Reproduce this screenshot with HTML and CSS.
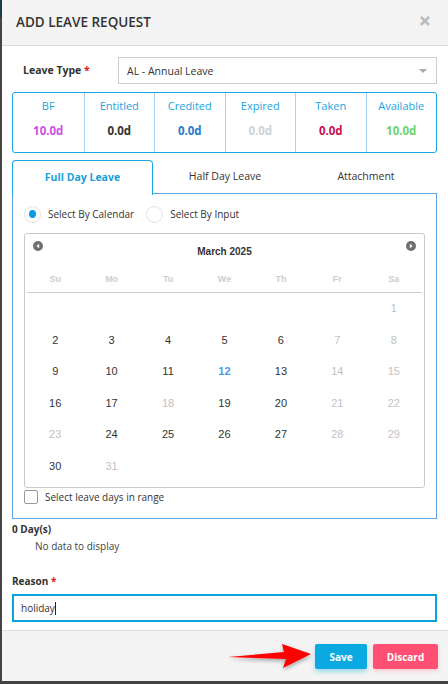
FILE: index.html
```html
<!DOCTYPE html>
<html>
<head>
<meta charset="utf-8">
<link rel="stylesheet" href="styles.css">
</head>
<body>
<div class="modal">
  <div class="modal-header">
    <h1 class="title">ADD LEAVE REQUEST</h1>
    <span class="close">&#x2715;</span>
  </div>
  <div class="modal-body">
    <div class="field-row">
      <label class="field-label">Leave Type <span class="req">*</span></label>
      <div class="select">
        <span>AL - Annual Leave</span>
        <span class="caret"></span>
      </div>
    </div>

    <div class="stats">
      <div class="stat"><div class="stat-label">BF</div><div class="stat-val v-bf">10.0d</div></div>
      <div class="stat"><div class="stat-label">Entitled</div><div class="stat-val v-ent">0.0d</div></div>
      <div class="stat"><div class="stat-label">Credited</div><div class="stat-val v-cred">0.0d</div></div>
      <div class="stat"><div class="stat-label">Expired</div><div class="stat-val v-exp">0.0d</div></div>
      <div class="stat"><div class="stat-label">Taken</div><div class="stat-val v-taken">0.0d</div></div>
      <div class="stat"><div class="stat-label">Available</div><div class="stat-val v-avail">10.0d</div></div>
    </div>

    <div class="tabs">
      <div class="tab active">Full Day Leave</div>
      <div class="tab">Half Day Leave</div>
      <div class="tab">Attachment</div>
    </div>
    <div class="tab-panel">
      <div class="radios">
        <span class="radio checked"></span><span class="radio-label first">Select By Calendar</span>
        <span class="radio"></span><span class="radio-label">Select By Input</span>
      </div>
      <div class="calendar">
        <div class="cal-head">
          <span class="nav"><svg width="10" height="10" viewBox="0 0 10 10"><circle cx="5" cy="5" r="5" fill="#6f6f6f"/><path d="M6.2 2.8 L3.4 5 L6.2 7.2 Z" fill="#fff"/></svg></span>
          <span class="cal-title">March 2025</span>
          <span class="nav"><svg width="10" height="10" viewBox="0 0 10 10"><circle cx="5" cy="5" r="5" fill="#6f6f6f"/><path d="M3.8 2.8 L6.6 5 L3.8 7.2 Z" fill="#fff"/></svg></span>
        </div>
        <div class="cal-grid dow">
          <span>Su</span><span>Mo</span><span>Tu</span><span>We</span><span>Th</span><span>Fr</span><span>Sa</span>
        </div>
        <div class="cal-grid days">
          <span></span><span></span><span></span><span></span><span></span><span></span><span class="off">1</span>
          <span>2</span><span>3</span><span>4</span><span>5</span><span>6</span><span class="off">7</span><span class="off">8</span>
          <span>9</span><span>10</span><span>11</span><span class="today">12</span><span>13</span><span class="off">14</span><span class="off">15</span>
          <span>16</span><span>17</span><span class="off">18</span><span>19</span><span>20</span><span class="off">21</span><span class="off">22</span>
          <span class="off">23</span><span>24</span><span>25</span><span>26</span><span>27</span><span class="off">28</span><span class="off">29</span>
          <span>30</span><span class="off">31</span><span></span><span></span><span></span><span></span><span></span>
        </div>
      </div>
      <div class="check-row">
        <span class="checkbox"></span><span class="check-label">Select leave days in range</span>
      </div>
    </div>

    <div class="days-count">0 Day(s)</div>
    <div class="no-data">No data to display</div>

    <label class="reason-label">Reason <span class="req">*</span></label>
    <div class="input"><span>holiday</span><span class="cursor"></span></div>
  </div>
  <div class="modal-footer">
    <svg class="arrow" width="92" height="34" viewBox="0 0 92 34">
      <defs>
        <filter id="sh" x="-20%" y="-40%" width="140%" height="180%">
          <feDropShadow dx="0" dy="2" stdDeviation="2" flood-color="#000" flood-opacity="0.35"/>
        </filter>
      </defs>
      <polygon points="2,18 58,13 56,5 85,15 57,29 60,20" fill="#ff0000" filter="url(#sh)"/>
    </svg>
    <button class="btn btn-save">Save</button>
    <button class="btn btn-discard">Discard</button>
  </div>
</div>
</body>
</html>
```

FILE: styles.css
```css
* { box-sizing: border-box; }
html, body { margin: 0; padding: 0; }
body {
  background: #444;
  font-family: "Open Sans", "Liberation Sans", sans-serif;
  color: #333;
  width: 448px;
  height: 684px;
  overflow: hidden;
  position: relative;
}
body::before {
  content: "";
  position: absolute;
  left: 0; top: 0;
  width: 2px; height: 17px;
  background: #173a4c;
}
.modal {
  margin-left: 2px;
  width: 446px;
  height: 681px;
  background: #fff;
  display: flex;
  flex-direction: column;
}
.modal-header {
  height: 46px;
  background: #f4f4f4;
  border-bottom: 1px solid #dcdcdc;
  display: flex;
  align-items: center;
  justify-content: space-between;
  padding: 0 17px 2px 14px;
}
.title {
  margin: 0;
  font-size: 13.5px;
  font-weight: 600;
  color: #333;
  letter-spacing: 0;
}
.close {
  color: #bdbdbd;
  font-size: 14px;
  font-weight: bold;
  margin-top: -2px;
  -webkit-text-stroke: 0.6px #bdbdbd;
}
.modal-body {
  flex: 1;
  padding: 11px 11px 0 10px;
}
.field-row {
  display: flex;
  align-items: center;
  height: 27px;
}
.field-label {
  width: 106px;
  padding-left: 11px;
  padding-bottom: 1px;
  font-size: 10.5px;
  font-weight: 700;
  color: #333;
}
.req { color: #e02020; }
.select {
  flex: 1;
  height: 27px;
  border: 1px solid #cfcfcf;
  display: flex;
  align-items: center;
  justify-content: space-between;
  padding: 0 9px 0 8px;
  font-size: 10.5px;
  color: #333;
}
.caret {
  width: 0; height: 0;
  border-left: 4px solid transparent;
  border-right: 4px solid transparent;
  border-top: 4px solid #aaa;
}
.stats {
  margin-top: 8px;
  height: 61px;
  border: 1.5px solid #1aa7e0;
  border-radius: 3px;
  display: grid;
  grid-template-columns: repeat(6, 1fr);
}
.stat {
  border-left: 1px solid #a9d6f2;
  text-align: center;
  padding-top: 5px;
}
.stat:first-child { border-left: none; }
.stat-label {
  font-size: 11px;
  color: #1ea3dc;
  line-height: 16px;
}
.stat-val {
  margin-top: 9px;
  font-size: 11.5px;
  font-weight: 700;
  line-height: 16px;
}
.v-bf { color: #cc4fe6; }
.v-ent { color: #333; }
.v-cred { color: #2a79c9; }
.v-exp { color: #ccd2da; }
.v-taken { color: #c4124e; }
.v-avail { color: #6cd46c; }
.tabs {
  margin-top: 7px;
  display: grid;
  grid-template-columns: 141px 1fr 1fr;
  height: 34px;
}
.tab {
  display: flex;
  align-items: center;
  justify-content: center;
  font-size: 10.5px;
  color: #333;
  padding-bottom: 3px;
}
.tab:nth-child(2) { padding-left: 2px; }
.tab.active {
  border: 1px solid #1aa7e0;
  border-bottom: none;
  border-radius: 4px 4px 0 0;
  color: #1a9fd8;
  font-weight: 700;
  background: #fff;
  position: relative;
  z-index: 1;
  height: 35px;
  padding-bottom: 2px;
}
.tab-panel {
  border: 1px solid #5ea6e6;
  margin-top: -1px;
  height: 326px;
  padding: 11px 11px 0 11px;
}
.radios {
  display: flex;
  align-items: center;
  height: 18px;
  font-size: 10px;
}
.radio {
  width: 17px; height: 17px;
  border: 1px solid #e2e2e2;
  border-radius: 50%;
  display: inline-flex;
  align-items: center;
  justify-content: center;
}
.radio.checked::after {
  content: "";
  width: 7px; height: 8px;
  border-radius: 50%;
  background: #0a9be0;
}
.radio-label {
  margin-left: 7px;
  color: #333;
}
.radio-label.first { margin-right: 12px; }
.calendar {
  margin-top: 10px;
  border: 1px solid #cacaca;
  border-radius: 3px;
  height: 255px;
  padding: 0 2px;
  font-family: "Liberation Sans", Arial, sans-serif;
}
.cal-head {
  display: flex;
  justify-content: space-between;
  align-items: flex-start;
  padding: 7px 6px 0 6px;
  height: 34px;
}
.nav { display: flex; height: 10px; }
.cal-title {
  font-size: 10px;
  font-weight: 700;
  color: #333;
  margin-top: 5px;
}
.cal-grid {
  display: grid;
  grid-template-columns: repeat(7, 1fr);
  text-align: center;
}
.dow {
  height: 25px;
  border-bottom: 1px solid #cdcdcd;
  font-size: 9px;
  font-weight: 700;
  color: #cdcdcd;
  align-items: start;
  padding-top: 6px;
}
.days span {
  height: 31.6px;
  line-height: 31.6px;
  font-size: 11px;
  color: #333;
}
.days span.off { color: #c2c2c2; }
.days span.today { color: #4b9ee2; font-weight: 700; }
.check-row {
  display: flex;
  align-items: center;
  margin-top: 2px;
  height: 14px;
}
.checkbox {
  width: 14px; height: 14px;
  border: 1px solid #9a9a9a;
  border-radius: 2px;
}
.check-label {
  margin-left: 7px;
  font-size: 10px;
  color: #333;
}
.days-count {
  margin-top: 3px;
  font-size: 10px;
  font-weight: 700;
  color: #333;
  line-height: 14px;
}
.no-data {
  margin-top: 3px;
  margin-left: 23px;
  font-size: 10px;
  color: #444;
  line-height: 14px;
}
.reason-label {
  display: block;
  margin-top: 21px;
  font-size: 10px;
  font-weight: 700;
  color: #333;
  line-height: 14px;
}
.input {
  margin-top: 6px;
  height: 28px;
  border: 2px solid #0aa3dc;
  display: flex;
  align-items: center;
  padding-left: 7px;
  font-size: 10px;
  color: #333;
}
.cursor {
  width: 1px; height: 13px;
  background: #222;
}
.modal-footer {
  position: relative;
  height: 51px;
  background: #f4f4f4;
  border-top: 1px solid #dcdcdc;
  display: flex;
  justify-content: flex-end;
  align-items: center;
  gap: 6px;
  padding: 1px 10px 0 0;
}
.btn {
  border: none;
  height: 25px;
  border-radius: 2px;
  color: #fff;
  font-family: "Open Sans", "Liberation Sans", sans-serif;
  font-weight: 700;
  font-size: 10px;
  padding: 0;
}
.btn-save {
  width: 52px;
  background: #0aa9e2;
  box-shadow: 0 3px 5px rgba(10, 169, 226, 0.35);
}
.btn-discard {
  width: 65px;
  background: #ff5074;
  box-shadow: 0 2px 4px rgba(255, 80, 116, 0.25);
}
.arrow {
  position: absolute;
  left: 224px;
  top: 8px;
}
```
